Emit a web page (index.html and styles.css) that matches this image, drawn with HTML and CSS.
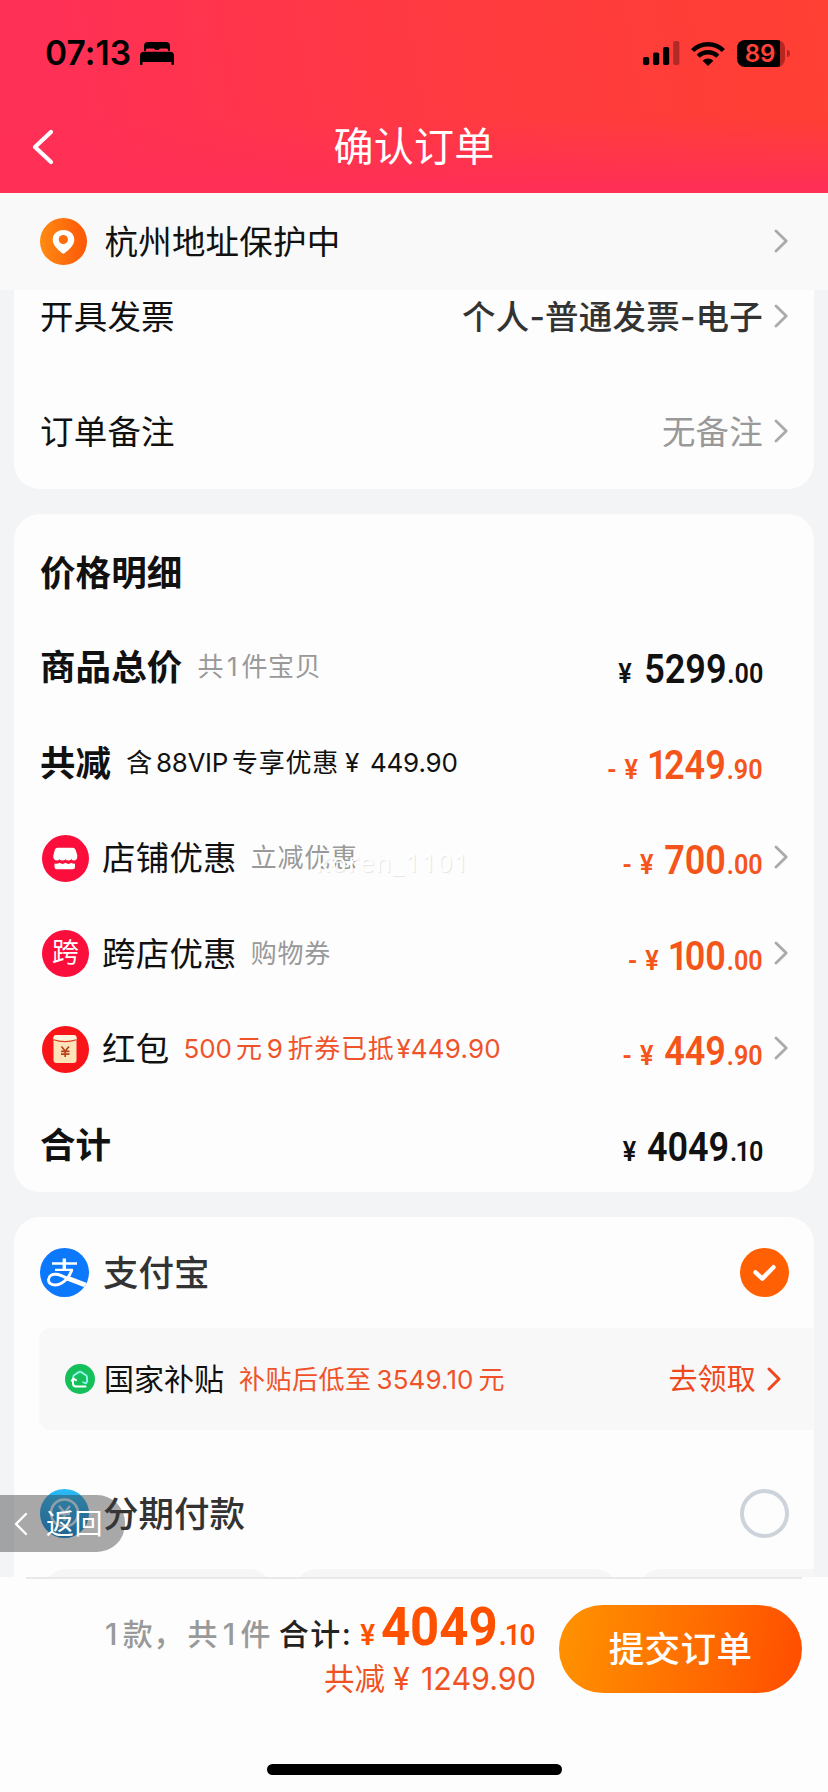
FILE: index.html
```html
<!DOCTYPE html>
<html lang="zh-CN">
<head>
<meta charset="utf-8">
<title>确认订单</title>
<link rel="stylesheet" href="styles.css">
</head>
<body>
<svg class="defs" width="0" height="0" aria-hidden="true">
  <defs>
    <symbol id="chev" viewBox="0 0 14 24"><path d="M2 2 L12.2 12 L2 22" fill="none" stroke="currentColor" stroke-width="2.800" stroke-linecap="round" stroke-linejoin="round"/></symbol>
  </defs>
</svg>
<div class="screen">
  <header class="header">
    <div class="status">
      <span class="clock">07:13</span>
      <svg class="bed" viewBox="0 0 34 23"><path d="M4 9V4.200Q4 0 8 0H26Q30 0 30 4.200V9H28.200V8Q28.200 6.400 26.500 6.400H20.500Q18.800 6.400 18.800 8H15.200Q15.200 6.400 13.500 6.400H7.500Q5.800 6.400 5.800 8V9Z"/><path d="M0 23V13.500Q0 9.700 4 9.700H30Q34 9.700 34 13.500V22.300Q34 23 33.300 23H31.500V20H2.500V23Z"/></svg>
      <span class="grow"></span>
      <svg class="signal" viewBox="0 0 37 24"><rect x="0" y="16" width="6.200" height="8" rx="1.800"/><rect x="10" y="11.500" width="6.200" height="12.500" rx="1.800"/><rect x="20" y="6" width="6.200" height="18" rx="1.800"/><rect x="30.200" y="0" width="6.200" height="24" rx="1.800" opacity=".3"/></svg>
      <svg class="wifi" viewBox="0 0 34 25"><g fill="none" stroke="#000" stroke-width="4.400"><path d="M1.600 9.500A22 22 0 0 1 32.400 9.500"/><path d="M7.200 15.200A14 14 0 0 1 26.800 15.200"/></g><path d="M11.600 19.700A7.700 7.700 0 0 1 22.400 19.700L17 25Z"/></svg>
      <span class="battery"><span class="level">89</span></span><span class="nub"></span>
    </div>
    <div class="nav">
      <svg class="back" viewBox="0 0 22 36"><path d="M19 3 L3 18 L19 33" fill="none" stroke="#fff" stroke-width="4.200" stroke-linecap="round" stroke-linejoin="round"/></svg>
      <h1 class="title">确认订单</h1>
    </div>
  </header>

  <div class="address">
    <svg class="pin" viewBox="0 0 47 47"><defs><linearGradient id="pg" x1="0" x2="1"><stop offset="0" stop-color="#ff8a12"/><stop offset="1" stop-color="#fd5708"/></linearGradient></defs><circle cx="23.500" cy="23.500" r="23.500" fill="url(#pg)"/><path d="M23.500 12C17 12 12.700 16.300 12.700 21.800C12.700 27 17.500 31.500 21.800 35Q23.300 36.200 24.800 35C29.500 31.500 34.300 27 34.300 21.800C34.300 16.300 30 12 23.500 12Z" fill="#fff"/><circle cx="23.300" cy="21.500" r="4.600" fill="#fd6b0c"/></svg>
    <span class="body-text">杭州地址保护中</span>
    <svg class="chev"><use href="#chev"/></svg>
  </div>

  <main class="content">
    <section class="card card-options">
      <div class="row row-invoice"><span class="body-text">开具发票</span><span class="value value-dark">个人-普通发票-电子</span><svg class="chev"><use href="#chev"/></svg></div>
      <div class="row row-remark"><span class="body-text">订单备注</span><span class="value value-muted">无备注</span><svg class="chev"><use href="#chev"/></svg></div>
    </section>

    <section class="card card-price">
      <div class="row"><h2 class="strong heading">价格明细</h2></div>
      <div class="row"><span class="strong">商品总价</span><span class="note note-count">共<span class="num">1</span>件宝贝</span><span class="price"><i class="yen yen-wide">¥</i><b>5299</b><i>.00</i></span></div>
      <div class="row"><span class="strong">共减</span><span class="note note-vip">含<span class="latin">88VIP</span>专享优惠<span class="vip-yen">¥</span><span class="vip-sum">449.90</span></span><span class="price off"><i class="minus">-</i><i class="yen">¥</i><b><span class="one">1</span>249</b><i>.90</i></span></div>
      <div class="row">
        <svg class="badge" viewBox="0 0 47 47"><circle cx="23.500" cy="23.500" r="23.500" fill="#fb0d3c"/><path d="M15.500 12.700H30.500Q33 12.700 34 16L35.300 20.500Q35.500 25.500 31.800 25.500Q29.400 25.500 29.400 23.800Q29.400 25.500 26.500 25.500Q23.500 25.500 23.500 23.800Q23.500 25.500 20.500 25.500Q17.600 25.500 17.600 23.800Q17.600 25.500 15.200 25.500Q11 25.500 11.300 20.500L12.500 16Q13.300 12.700 15.500 12.700Z" fill="#fff"/><path d="M12.500 28.500Q15.500 29.200 17.600 27.800Q20.500 30 23.500 27.800Q26.500 30 29.400 27.800Q31.500 29.200 33 28.500V32Q33 34.300 30.700 34.300H14.800Q12.500 34.300 12.500 32Z" fill="#fff"/></svg>
        <span class="body-text">店铺优惠</span><span class="note note-muted">立减优惠</span><span class="price off"><i class="minus">-</i><i class="yen">¥</i><b>700</b><i>.00</i></span><svg class="chev"><use href="#chev"/></svg>
        <span class="watermark">koren_1101</span>
      </div>
      <div class="row">
        <span class="badge badge-cross">跨</span>
        <span class="body-text">跨店优惠</span><span class="note note-muted">购物券</span><span class="price off"><i class="minus">-</i><i class="yen">¥</i><b><span class="one">1</span>00</b><i>.00</i></span><svg class="chev"><use href="#chev"/></svg>
      </div>
      <div class="row">
        <svg class="badge" viewBox="0 0 47 47"><circle cx="23.500" cy="23.500" r="23.500" fill="#f9141a"/><path d="M11.500 12Q11.500 9 14.500 9H31.500Q34.500 9 34.500 12V34Q34.500 37 31.500 37H14.500Q11.500 37 11.500 34Z" fill="#fee4b8"/><path d="M11.500 12Q11.500 9 14.500 9H31.500Q34.500 9 34.500 12V13.500Q23 17 11.500 13.500Z" fill="#fff5df"/><path d="M11.500 13.800Q23 17.500 34.500 13.800" fill="none" stroke="#d93c22" stroke-width="1.200"/><path d="M19.500 20.500L23.200 25.200L27 20.500M23.200 25V31M19 25.300H27.500M19 28.200H27.500" fill="none" stroke="#b8421a" stroke-width="1.700"/></svg>
        <span class="body-text">红包</span><span class="note note-coupon"><span class="c0">500</span><span class="c1">元</span><span class="c2">9</span>折券已抵<span class="c3">¥449.90</span></span><span class="price off"><i class="minus">-</i><i class="yen">¥</i><b>449</b><i>.90</i></span><svg class="chev"><use href="#chev"/></svg>
      </div>
      <div class="row"><span class="strong">合计</span><span class="price"><i class="yen">¥</i><b>4049</b><i>.<span class="one-s">1</span>0</i></span></div>
    </section>

    <section class="card card-pay">
      <div class="pay-row">
        <svg class="pay-icon" viewBox="0 0 49 49"><defs><clipPath id="pc"><circle cx="24.500" cy="24.500" r="24.500"/></clipPath></defs><circle cx="24.500" cy="24.500" r="24.500" fill="#0c78fb"/><g clip-path="url(#pc)" fill="none" stroke="#fff"><path d="M12 15.500H37M15 21.800H33" stroke-width="2.300"/><path d="M24.300 10.500V21.800" stroke-width="3.400"/><path d="M32 21.800C29.500 29 23 37 15.500 37C10.500 37 8.300 34.500 8.500 31.500C8.800 28 12 26 16 26.300C21 26.600 25 29.500 30 31.800" stroke-width="2.900"/><path d="M27 30L48 38" stroke-width="5"/></g></svg>
        <span class="pay-name">支付宝</span>
        <svg class="radio" viewBox="0 0 49 49"><circle cx="24.500" cy="24.500" r="24.500" fill="#ff6004"/><path d="M15.500 24.300L22.300 30.600L33.500 19.200" fill="none" stroke="#fff" stroke-width="4.400" stroke-linecap="round" stroke-linejoin="round"/></svg>
      </div>
      <div class="subsidy">
        <svg class="subsidy-icon" viewBox="0 0 30 30"><circle cx="15" cy="15" r="15" fill="#15c05a"/><path d="M8.200 14V13Q8.200 12 9.100 11.200L14.200 7.900Q15 7.300 15.800 7.900L21 11.300Q22 12 22 13.200V17Q22 18.800 20.300 19.300" fill="none" stroke="#8df4ed" stroke-width="1.900" stroke-linecap="round"/><path d="M8 15.500L8 19.500Q8 22.600 11 22.600H20.500M6.800 16.600L8.400 14.600L11 16.200" fill="none" stroke="#fff" stroke-width="2" stroke-linecap="round" stroke-linejoin="round"/><path d="M18 18.200L20.600 19.300L22.500 17.300" fill="none" stroke="#8df4ed" stroke-width="1.600" stroke-linecap="round" stroke-linejoin="round"/></svg>
        <span class="subsidy-name">国家补贴</span>
        <span class="subsidy-note">补贴后低至<span class="subsidy-sum">3549.10</span>元</span>
        <span class="claim">去领取</span>
        <svg class="chev chev-claim" viewBox="0 0 14 24"><path d="M2 2 L12 12 L2 22" fill="none" stroke="currentColor" stroke-width="3" stroke-linecap="round" stroke-linejoin="round"/></svg>
      </div>
      <div class="pay-row pay-row-split">
        <svg class="pay-icon" viewBox="0 0 49 49"><defs><linearGradient id="bg" x1="0" y1="0" x2="0" y2="1"><stop offset="0" stop-color="#2cbcf7"/><stop offset="1" stop-color="#0d84d8"/></linearGradient></defs><circle cx="24.500" cy="24.500" r="24.500" fill="url(#bg)"/><circle cx="24.500" cy="24" r="13.500" fill="none" stroke="#d3edfb" stroke-width="2.600"/><path d="M19 17L24.500 23.500L30 17M24.500 23V32M19 25H30M19 29H30" fill="none" stroke="#d3edfb" stroke-width="2.400"/></svg>
        <span class="pay-name">分期付款</span>
        <span class="radio radio-empty"></span>
      </div>
      <div class="plans"><span></span><span></span><span></span></div>
    </section>
    <div class="return"><svg class="return-chev" viewBox="0 0 14 24"><path d="M12 2 L2 12 L12 22" fill="none" stroke="#fff" stroke-width="2.400" stroke-linecap="round" stroke-linejoin="round"/></svg><span>返回</span></div>
  </main>

  <footer class="footer">
    <div class="divider"></div>
    <div class="checkout">
      <div class="summary">
        <div class="total"><span class="count"><span class="t1">1</span><span>款，</span><span class="t2">共</span><span class="t3">1</span><span>件</span></span><span class="total-label">合计:</span><span class="total-price"><i class="ty">¥</i><b>4049</b><i>.<span class="one-s">1</span>0</i></span></div>
        <div class="saved"><span>共减</span><span class="sy">¥</span><span>1249.90</span></div>
      </div>
      <button class="submit">提交订单</button>
    </div>
    <div class="home"></div>
  </footer>
</div>
</body>
</html>
```
FILE: styles.css
```css
* { box-sizing: border-box; }
body {
  margin: 0;
  font-family: "Inter", "Noto Sans CJK SC", sans-serif;
  color: #111;
}
.defs { position: absolute; }
i { font-style: normal; }
h1, h2 { margin: 0; }
.screen {
  width: 828px;
  height: 1792px;
  display: flex;
  flex-direction: column;
  overflow: hidden;
  background: #f3f4f6;
}
.grow { flex: 1; }

/* header */
.header {
  height: 193px;
  flex: none;
  background:
    linear-gradient(180deg, rgba(255,47,87,0) 60%, #ff2f56 98%),
    linear-gradient(80deg, #ff3055 10%, #ff3a40 55%, #ff4033 100%);
}
.status {
  height: 106px;
  padding: 0 38px 0 45px;
  display: flex;
  align-items: center;
}
.clock { font-weight: 600; font-size: 33.500px; line-height: 40px; letter-spacing: .1px; color: #000; width: 95px; }
.bed { width: 34px; height: 23px; }
.signal { width: 37px; height: 24px; margin-right: 11px; }
.wifi { width: 34px; height: 25px; margin-right: 12px; }
.battery {
  width: 48px; height: 27px; border-radius: 8px; overflow: hidden;
  background: linear-gradient(90deg, #000 43px, rgba(90,10,10,.45) 43px);
  color: #ff4238; font-weight: 600; font-size: 24px; line-height: 27px; text-align: center;
}
.level { display: block; width: 46px; }
.nub { width: 3px; height: 7px; margin-left: 2px; background: rgba(120,10,10,.5); border-radius: 0 3px 3px 0; }
.nav { height: 82px; display: grid; grid-template-columns: 80px 1fr 80px; align-items: center; }
.back { width: 22px; height: 36px; margin-left: 32px; }
.title { font-size: 40px; font-weight: 400; line-height: 50px; letter-spacing: .3px; text-align: center; color: #fff; }

/* address */
.address {
  height: 97px;
  flex: none;
  display: flex;
  align-items: center;
  padding: 0 40px 0 39.500px;
  background: #f9f9f9;
}
.pin { width: 47px; height: 47px; margin-right: 18px; }
.chev { width: 14px; height: 24px; color: #aaa; flex: none; margin-left: auto; margin-bottom: 2px; }
.body-text { font-size: 33.500px; line-height: 44px; letter-spacing: .2px; white-space: nowrap; }

/* cards */
.content { flex: 1; min-height: 0; overflow: hidden; padding: 0 14px; display: flex; flex-direction: column; gap: 25px; position: relative; }
.card { background: #fdfdfd; border-radius: 26px; flex: none; }
.card-options { height: 199px; border-radius: 0 0 26px 26px; padding: 0 26px; }
.row { position: relative; display: flex; align-items: center; height: 95.500px; }
.row-invoice { height: 54px; }
.row-remark { height: 176px; }
.value { margin-left: auto; margin-right: 11px; font-size: 33.500px; letter-spacing: .2px; line-height: 44px; }
.value + .chev { margin-left: 0; }
.value-dark { color: #333; font-weight: 500; }
.value-muted { color: #999; }

.card-price { height: 678px; padding: 10px 26px 0; }
.strong { font-size: 35.500px; line-height: 48px; padding-top: 2px; letter-spacing: .1px; font-weight: 600; white-space: nowrap; }
.heading { padding-top: 4px; }
.note { font-size: 26px; line-height: 36px; letter-spacing: .7px; white-space: nowrap; }
.note-count, .note-muted { color: #999; margin-left: 14px; }
.note-count { margin-left: 15px; }
.num { margin: 0 3px; }
.note-vip { margin-left: 15px; }
.latin { margin: 0 4px 0 3px; letter-spacing: -.3px; }
.vip-yen { margin: 0 10px 0 6px; }
.vip-sum { letter-spacing: -.2px; }
.badge { width: 47px; height: 47px; margin: 0 13px 0 2px; flex: none; }
.badge-cross { border-radius: 50%; background: #fb0d3c; color: #fff; font-size: 27px; line-height: 46px; text-align: center; }
.note-coupon { color: #f0532a; margin-left: 14px; }
.c0 { letter-spacing: 0; }
.c1 { margin: 0 4px 0 4px; }
.c2 { margin-right: 4px; }
.c3 { margin-left: 2px; letter-spacing: .2px; }

.price {
  margin-left: auto;
  margin-right: 25px;
  padding-top: 10px;
  font-family: "Roboto", "Liberation Sans", sans-serif;
  font-size: 28px;
  font-weight: 600;
  line-height: 44px;
  white-space: nowrap;
  transform: scaleX(.9);
  transform-origin: right;
}
.price + .chev { margin-left: -14px; }
.price b { font-size: 40px; font-weight: 600; margin-right: 1px; }
.yen { margin-right: 12px; }
.yen-wide { margin-right: 14px; }
.minus { margin-right: 9px; }
.one { letter-spacing: -4px; margin-left: -2px; }
.one-s { letter-spacing: -1px; margin-left: -2px; }
.off { color: #f5541a; }
.watermark {
  position: absolute;
  left: 276px;
  top: 33px;
  font-family: "Noto Sans", sans-serif;
  font-size: 26px;
  line-height: 36px;
  letter-spacing: 1.200px;
  color: #fff;
  text-shadow: 1px 1px 1px rgba(0,0,0,.1);
}

/* payment */
.card-pay { height: 380px; border-radius: 26px 26px 0 0; overflow: hidden; }
.pay-row { height: 111px; display: flex; align-items: center; padding: 0 25px 0 26px; }
.pay-row-split { height: 164px; padding-top: 3px; }
.pay-icon { width: 49px; height: 49px; margin-right: 14px; }
.pay-name { font-size: 35.500px; line-height: 48px; padding-top: 3px; letter-spacing: 0; font-weight: 500; color: #333; }
.radio { width: 49px; height: 49px; margin-left: auto; }
.radio-empty { border: 4.500px solid #ccd3da; border-radius: 50%; }
.subsidy { height: 102px; margin-left: 25px; padding: 0 33px 0 26px; display: flex; align-items: center; background: #f8f8f8; border-radius: 12px 0 0 12px; white-space: nowrap; }
.subsidy-icon { width: 30px; height: 30px; margin-right: 9px; }
.subsidy-name { font-size: 30px; line-height: 40px; }
.subsidy-note { font-size: 26px; line-height: 36px; padding-top: 1px; letter-spacing: .5px; color: #f0532a; margin-left: 15px; }
.subsidy-sum { margin: 0 5px; letter-spacing: .1px; }
.claim { font-size: 29px; line-height: 40px; padding-top: 1px; color: #f0481e; margin-left: auto; margin-right: 11px; letter-spacing: .2px; }
.chev-claim { color: #f0481e; margin-left: 0; margin-bottom: 0; }
.plans { display: grid; grid-template-columns: 230px 325px 200px; gap: 20px; margin: -25px 0 0 29px; height: 60px; }
.plans span { background: #f6f6f6; border-radius: 24px; }
.return {
  position: absolute;
  left: 0;
  top: 1205px;
  width: 125px;
  height: 57px;
  border-radius: 0 28px 28px 0;
  background: rgba(60,60,60,.44);
  color: #fff;
  font-size: 28px;
  line-height: 56px;
  letter-spacing: .6px;
  display: flex;
  align-items: center;
  padding-left: 14px;
}
.return-chev { width: 14px; height: 24px; margin-right: 18px; }

/* footer */
.footer { height: 215px; flex: none; background: #fdfdfd; display: flex; flex-direction: column; align-items: center; }
.divider { width: 776px; height: 2px; background: #e9e9e9; }
.checkout { align-self: stretch; height: 140px; padding: 26px 26px 0 0; display: flex; justify-content: flex-end; }
.summary { width: 460px; margin-right: 23px; display: flex; flex-direction: column; align-items: flex-end; }
.total { display: flex; align-items: baseline; white-space: nowrap; height: 54px; line-height: 54px; margin-top: -5px; margin-bottom: 5px; font-size: 30px; font-weight: 500; }
.count { color: #999; letter-spacing: .3px; }
.t1 { margin-right: 5px; }
.t2 { margin-left: 4px; }
.t3 { margin: 0 5px; }
.total-label { margin-left: 8px; color: #222; letter-spacing: 1.500px; }
.total-price { margin-left: 1px; color: #ff5000; font-family: "Roboto", "Liberation Sans", sans-serif; font-size: 29px; font-weight: 600; transform: scaleX(.96); transform-origin: right; }
.total-price b { font-size: 53px; font-weight: 700; margin-right: 1px; }
.ty { margin-right: 6px; }
.saved { font-size: 30.500px; line-height: 40px; color: #f0531f; display: flex; }
.sy { margin: 0 11px 0 8px; }
.submit {
  width: 243px;
  height: 88px;
  border: 0;
  padding: 2px 0 0;
  border-radius: 44px;
  background: linear-gradient(100deg, #ff9000 5%, #ff6a00 60%, #ff5000 95%);
  color: #fff;
  font: 500 35.500px/86px "Inter", "Noto Sans CJK SC", sans-serif;
  letter-spacing: .4px;
}
.home { width: 295px; height: 11px; margin-top: 45px; border-radius: 6px; background: #000; }
```
